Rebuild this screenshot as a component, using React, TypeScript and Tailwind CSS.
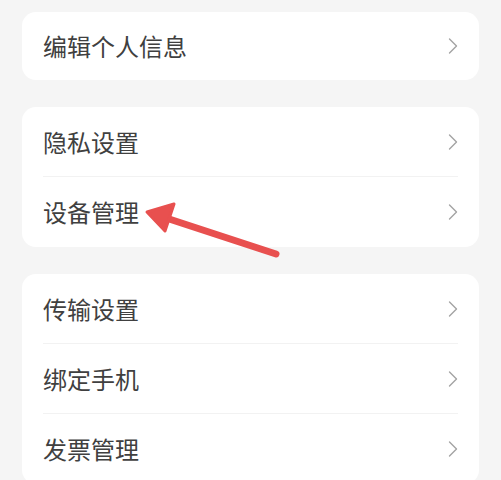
import { ReactNode } from 'react';

const groups: string[][] = [
  ['编辑个人信息'],
  ['隐私设置', '设备管理'],
  ['传输设置', '绑定手机', '发票管理'],
];

function Chevron() {
  return (
    <svg width="10" height="16" viewBox="0 0 10 16" fill="none" className="shrink-0">
      <path d="M1.5 1 L8.5 8 L1.5 15" stroke="#a3a3a3" strokeWidth="1.4" strokeLinecap="round" strokeLinejoin="round" />
    </svg>
  );
}

function Card({ children }: { children: ReactNode }) {
  return <div className="bg-white rounded-[14px]">{children}</div>;
}

export default function App() {
  return (
    <div
      className="relative w-[501px] h-[480px] overflow-hidden bg-[#f5f5f5] px-[22px] pt-[12px]"
      style={{ fontFamily: '"Noto Sans CJK SC", "Noto Sans", sans-serif' }}
    >
      <div className="flex flex-col gap-[27px]">
        {groups.map((items, gi) => (
          <Card key={gi}>
            {items.map((label, i) => (
              <div key={label} className="px-[21px]">
                <div
                  className={`flex items-center justify-between ${gi === 0 ? 'h-[68px]' : 'h-[70px]'} ${
                    i < items.length - 1 ? 'border-b border-[#f2f2f2]' : ''
                  }`}
                >
                  <span className="text-[24px] leading-none text-[#404040]">{label}</span>
                  <Chevron />
                </div>
              </div>
            ))}
          </Card>
        ))}
      </div>

      {/* annotation arrow pointing at 设备管理 */}
      <svg className="absolute left-0 top-0 pointer-events-none" width="501" height="480" viewBox="0 0 501 480">
        <line x1="276" y1="254" x2="160" y2="216" stroke="#e8504f" strokeWidth="7" strokeLinecap="round" />
        <polygon points="147,212 174,204 165,231" fill="#e8504f" stroke="#e8504f" strokeWidth="3" strokeLinejoin="round" />
      </svg>
    </div>
  );
}
